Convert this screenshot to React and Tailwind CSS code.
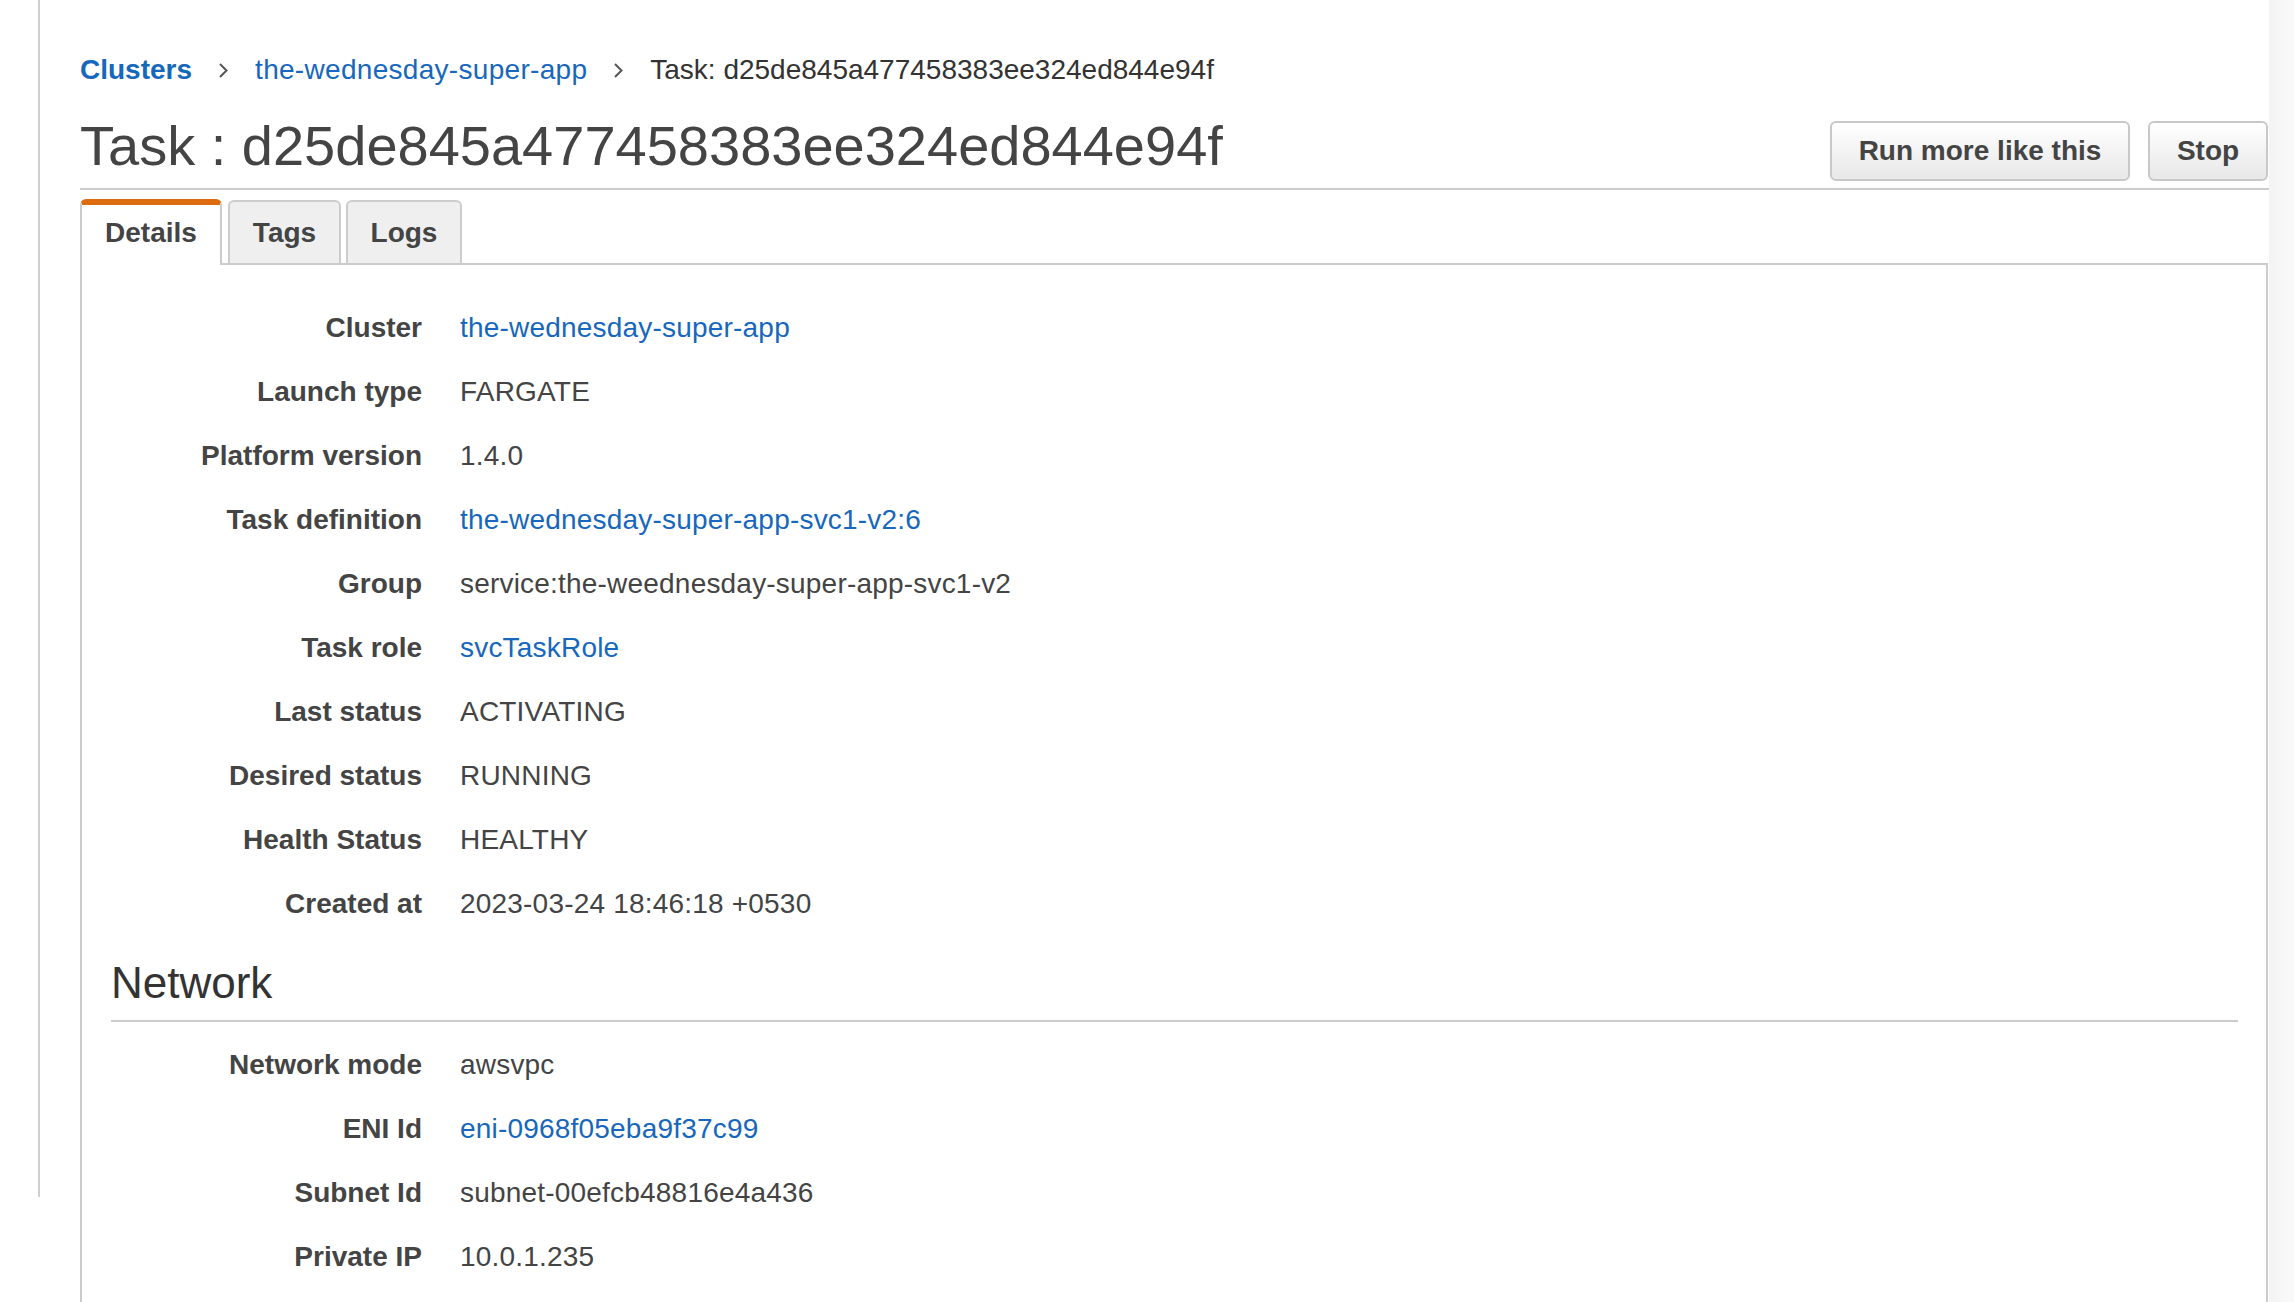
import { Fragment } from 'react';

const LINK = 'text-[#1767bd]';

const details = [
  { label: 'Cluster', value: 'the-wednesday-super-app', link: true },
  { label: 'Launch type', value: 'FARGATE' },
  { label: 'Platform version', value: '1.4.0' },
  { label: 'Task definition', value: 'the-wednesday-super-app-svc1-v2:6', link: true },
  { label: 'Group', value: 'service:the-weednesday-super-app-svc1-v2' },
  { label: 'Task role', value: 'svcTaskRole', link: true },
  { label: 'Last status', value: 'ACTIVATING' },
  { label: 'Desired status', value: 'RUNNING' },
  { label: 'Health Status', value: 'HEALTHY' },
  { label: 'Created at', value: '2023-03-24 18:46:18 +0530' },
];

const network = [
  { label: 'Network mode', value: 'awsvpc' },
  { label: 'ENI Id', value: 'eni-0968f05eba9f37c99', link: true },
  { label: 'Subnet Id', value: 'subnet-00efcb48816e4a436' },
  { label: 'Private IP', value: '10.0.1.235' },
];

function Chevron() {
  return (
    <svg className="mx-[26px] w-[11px] h-[17px] text-[#555]" viewBox="0 0 11 17" fill="none" stroke="currentColor" strokeWidth={2}>
      <polyline points="2,2 8.5,8.5 2,15" />
    </svg>
  );
}

function Row({ label, value, link }) {
  return (
    <div className="flex items-center h-[64px] text-[28px] leading-[34px]">
      <div className="w-[340px] text-right font-bold text-[#444]">{label}</div>
      <div className={`ml-[38px] tracking-[0.2px] ${link ? LINK : 'text-[#444]'}`}>{value}</div>
    </div>
  );
}

function Button({ children, width }) {
  return (
    <button className={`${width} h-[60px] rounded-[6px] border-2 border-[#c8c8c8] bg-gradient-to-b from-white to-[#e8e8e8] text-[28px] font-bold text-[#444]`}>
      {children}
    </button>
  );
}

export default function App() {
  return (
    <div className="flex h-[1302px] w-[2294px] overflow-hidden bg-white font-['Liberation_Sans',Arial,sans-serif]">
      <div className="w-[38px] shrink-0" />
      <div className="w-[2px] h-[1197px] shrink-0 bg-[#cfcfcf]" />

      <div className="ml-[40px] flex-1 flex flex-col min-w-0">
        {/* Breadcrumb */}
        <nav className="pt-[53px] flex items-center text-[28px] leading-[34px]">
          <span className={`font-bold ${LINK}`}>Clusters</span>
          <Chevron />
          <span className={`tracking-[0.3px] ${LINK}`}>the-wednesday-super-app</span>
          <Chevron />
          <span className="text-[#333]">Task: d25de845a477458383ee324ed844e94f</span>
        </nav>

        {/* Header */}
        <div className="flex items-end justify-between border-b-2 border-[#cccccc]">
          <h1 className="mt-[27px] mb-[10px] text-[56px] leading-[64px] text-[#444]">
            Task : d25de845a477458383ee324ed844e94f
          </h1>
          <div className="flex gap-[18px] mb-[7px] mr-[1px]">
            <Button width="w-[300px]">Run more like this</Button>
            <Button width="w-[120px]">Stop</Button>
          </div>
        </div>

        {/* Tabs */}
        <div className="mt-[9px] flex items-end gap-[6px] relative z-10 text-[28px] font-bold text-[#444]">
          <div className="w-[142px] h-[66px] -mb-[2px] pb-[5px] flex items-center justify-center rounded-t-[6px] border-2 border-b-0 border-[#cccccc] border-t-[6px] border-t-[#dd6b10] bg-white">
            Details
          </div>
          <div className="w-[113px] h-[63px] flex items-center justify-center rounded-t-[6px] border-2 border-b-0 border-[#cccccc] bg-[#efefef]">
            Tags
          </div>
          <div className="w-[116px] h-[63px] -ml-[1px] flex items-center justify-center rounded-t-[6px] border-2 border-b-0 border-[#cccccc] bg-[#efefef]">
            Logs
          </div>
        </div>

        {/* Panel */}
        <div className="flex-1 mr-[1px] border-2 border-b-0 border-[#cccccc] pt-[31px]">
          {details.map(r => (
            <Row key={r.label} {...r} />
          ))}

          <h2 className="mt-[21px] ml-[29px] mr-[28px] pb-[11px] border-b-2 border-[#cccccc] text-[44px] leading-[52px] text-[#333]">
            Network
          </h2>
          <div className="mt-[11px]">
            {network.map(r => (
              <Fragment key={r.label}>
                <Row {...r} />
              </Fragment>
            ))}
          </div>
        </div>
      </div>

      <div className="w-[25px] shrink-0 bg-gradient-to-r from-[#f3f3f3] to-[#fafafa]" />
    </div>
  );
}
